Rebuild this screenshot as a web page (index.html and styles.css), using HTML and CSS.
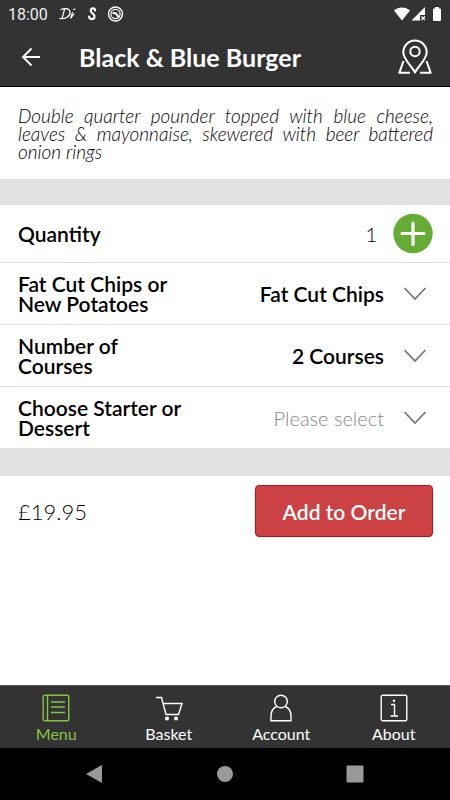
FILE: index.html
```html
<!DOCTYPE html>
<html lang="en">
<head>
<meta charset="utf-8">
<meta name="viewport" content="width=device-width, initial-scale=1">
<title>Black &amp; Blue Burger</title>
<link rel="stylesheet" href="styles.css">
</head>
<body>
<header class="top">
  <div class="status">
    <span class="clock">18:00</span>
    <svg class="notices" width="66" height="18" viewBox="0 0 66 18" fill="none" stroke="#fff" stroke-linecap="round" aria-hidden="true">
      <path d="M5.500 4.500L3 13.500M.800 13.500C7 14.500 11.500 10.500 11 7C10.500 3 5 3 2 4.500M13.500 7.500L11.500 13.500L15 9M14.500 4.500L16 4" stroke-width="1.200"/>
      <path d="M36 5.500C36.500 2.500 31.500 2.500 31.800 6C32 8.500 36 8.500 35.500 12C35 15 29.500 14.500 30.200 11.500" stroke-width="2.200"/>
      <circle cx="56.500" cy="9" r="7" stroke-width="1.400"/>
      <circle cx="56.500" cy="9" r="4.600" stroke-width="1.200"/>
      <path d="M54.300 8L57 8.500L59.500 12" stroke-width="2"/>
    </svg>
    <svg class="signals" width="50" height="16" viewBox="0 0 50 16" fill="#fff" aria-hidden="true">
      <path d="M2 4.500C6.500 .500 13.500 .500 18 4.500L10 14.500Z"/>
      <path d="M33 1V9H28V14.500H19.500Z"/>
      <path d="M29.500 10.500l3.500 3.500M33 10.500l-3.500 3.500" stroke="#fff" stroke-width="1.200"/>
      <path d="M43 1h4v1.500h1a1 1 0 0 1 1 1V14a1 1 0 0 1-1 1h-6a1 1 0 0 1-1-1V3.500a1 1 0 0 1 1-1h1z"/>
    </svg>
  </div>
  <div class="bar">
    <button class="icon-button back" type="button" aria-label="Back">
      <svg width="20" height="20" viewBox="0 0 20 20" fill="none" stroke="#fff" stroke-width="1.800"><path d="M19 10H2M10.500 1.500L2 10l8.500 8.500"/></svg>
    </button>
    <h1>Black &amp; Blue Burger</h1>
    <button class="icon-button" type="button" aria-label="Find us">
      <svg width="36" height="36" viewBox="0 0 36 36" fill="none" stroke="#fff" stroke-width="2" stroke-linejoin="round"><path d="M18 33.500C15 27.500 6.300 20.500 6.300 13.300a11.700 11.700 0 0 1 23.400 0C29.700 20.500 21 27.500 18 33.500Z"/><circle cx="18" cy="12.500" r="4.700"/><path d="M6.500 22L2.300 33.800H13M29.500 22l4.200 11.800H23"/></svg>
    </button>
  </div>
</header>
<main>
  <p class="description">Double quarter pounder topped with blue cheese, leaves &amp; mayonnaise, skewered with beer battered onion rings</p>
  <form class="order">
    <div class="options">
      <div class="row row-quantity">
        <span class="label" id="quantity-label">Quantity</span>
        <output class="quantity" aria-labelledby="quantity-label">1</output>
        <button class="add" type="button" aria-label="Add one">
          <svg width="40" height="40" viewBox="0 0 40 40"><circle cx="20" cy="19.500" r="19.700" fill="#65ac35"/><path d="M20 9v21.500M9 19.500h22" stroke="#fff" stroke-width="3.200" stroke-linecap="round"/></svg>
        </button>
      </div>
      <div class="row">
        <label class="label" for="side">Fat Cut Chips or New Potatoes</label>
        <select id="side"><option>Fat Cut Chips</option><option>New Potatoes</option></select>
        <svg class="chevron" width="24" height="14" viewBox="0 0 24 14"><path d="M1.500 1L12 12L22.500 1"/></svg>
      </div>
      <div class="row">
        <label class="label" for="courses">Number of Courses</label>
        <select id="courses"><option>2 Courses</option></select>
        <svg class="chevron" width="24" height="14" viewBox="0 0 24 14"><path d="M1.500 1L12 12L22.500 1"/></svg>
      </div>
      <div class="row">
        <label class="label" for="extra">Choose Starter or Dessert</label>
        <select id="extra" class="empty"><option>Please select</option></select>
        <svg class="chevron" width="24" height="14" viewBox="0 0 24 14"><path d="M1.500 1L12 12L22.500 1"/></svg>
      </div>
    </div>
    <div class="checkout">
      <span class="price">£19.95</span>
      <button class="submit" type="button">Add to Order</button>
    </div>
  </form>
</main>
<nav class="tabs">
  <a class="active" href="#menu">
    <svg width="28" height="28" viewBox="0 0 28 28"><rect x="1.200" y="1.200" width="25.600" height="25.600" rx="1.500"/><path d="M5.500 1v26M9 8h14M9 13h14M9 18.500h14"/></svg>
    Menu
  </a>
  <a href="#basket">
    <svg width="28" height="28" viewBox="0 0 28 28"><path d="M1 3.500h5.500L11 20.500h12.500L27 9.500H8.500"/><circle cx="12" cy="24.500" r="1.300" fill="#fff"/><circle cx="21" cy="24.500" r="1.300" fill="#fff"/></svg>
    Basket
  </a>
  <a href="#account">
    <svg width="28" height="28" viewBox="0 0 28 28"><circle cx="14" cy="7.500" r="6.300"/><path d="M9.500 12.500C5.500 14.500 4 18 4 22v4.800h20V22c0-4-1.500-7.500-5.500-9.500"/></svg>
    Account
  </a>
  <a href="#about">
    <svg width="28" height="28" viewBox="0 0 28 28"><rect x="1.200" y="1.200" width="25.600" height="25.600" rx="1.500"/><path d="M11 10.500h3.500v11.500M10.500 22h7.500"/><circle cx="14" cy="6.700" r="1.200" fill="#fff" stroke="none"/></svg>
    About
  </a>
</nav>
<div class="system">
  <button type="button" aria-label="System back"><svg width="18" height="20" viewBox="0 0 18 20"><path d="M0 10L16 1v18Z"/></svg></button>
  <button type="button" aria-label="Home"><svg width="18" height="20" viewBox="0 0 18 20"><circle cx="9" cy="10" r="8"/></svg></button>
  <button type="button" aria-label="Recent apps"><svg width="18" height="20" viewBox="0 0 18 20"><rect x=".500" y="1.500" width="17" height="17" rx="1"/></svg></button>
</div>
</body>
</html>
```
FILE: styles.css
```css
* {
  box-sizing: border-box;
}

body {
  margin: 0;
  min-height: 100vh;
  display: flex;
  flex-direction: column;
  background: #fff;
  color: #000;
  font-family: Lato, "Liberation Sans", sans-serif;
  font-size: 21px;
}

button,
select {
  font: inherit;
  border: 0;
  padding: 0;
  background: none;
}

svg {
  display: block;
}

.top {
  background: #333;
  color: #fff;
  border-bottom: 1px solid #000;
}

.status {
  height: 28px;
  padding: 0 8px;
  display: flex;
  align-items: center;
}

.clock {
  font: 16px Roboto, sans-serif;
  color: #eee;
}

.notices {
  margin-left: 11px;
}

.signals {
  margin-left: auto;
}

.bar {
  height: 58px;
  padding: 0 17px 0 21px;
  display: flex;
  align-items: center;
}

h1 {
  flex: 1;
  margin: 0 0 0 38px;
  font-size: 25px;
  font-weight: 700;
  line-height: 28px;
}

.description {
  margin: 0;
  padding: 20px 17px 18px 18px;
  font-size: 19px;
  font-style: italic;
  font-weight: 300;
  line-height: 18px;
  text-align: justify;
}

.options {
  border-top: 26px solid #e2e2e4;
  border-bottom: 27px solid #e2e2e4;
}

.row {
  position: relative;
  display: flex;
  align-items: center;
  min-height: 62px;
  padding: 0 0 0 18px;
  border-bottom: 1px solid #ddd;
}

.row-quantity {
  min-height: 58px;
  padding-right: 17px;
}

.label {
  width: 172px;
  font-weight: 600;
  line-height: 20px;
}

.quantity {
  flex: 1;
  text-align: right;
  font-size: 20px;
  font-weight: 300;
}

.add {
  margin-left: 16px;
}

select {
  flex: 1;
  align-self: stretch;
  min-width: 0;
  padding-right: 66px;
  appearance: none;
  text-align: right;
  text-align-last: right;
  font-weight: 600;
  color: #000;
}

.empty {
  font-size: 20px;
  font-weight: 300;
  color: #888;
}

.chevron {
  position: absolute;
  right: 23px;
  pointer-events: none;
  fill: none;
  stroke: #777;
  stroke-width: 1.8;
}

.checkout {
  display: flex;
  align-items: center;
  justify-content: space-between;
  padding: 9px 17px 9px 18px;
}

.price {
  font-size: 22px;
  font-weight: 300;
}

.submit {
  width: 178px;
  height: 52px;
  border: 1px solid #c40f18;
  border-radius: 4px;
  background: #cc4144;
  color: #fff;
  font-weight: 600;
}

.tabs {
  margin-top: auto;
  height: 63px;
  display: flex;
  background: #333;
  border-top: 1px solid #555;
}

.tabs a {
  flex: 1;
  display: flex;
  flex-direction: column;
  align-items: center;
  padding-top: 8px;
  color: #fff;
  text-decoration: none;
  font-size: 16px;
  line-height: 24px;
}

.tabs svg {
  fill: none;
  stroke: currentColor;
  stroke-width: 1.4;
}

.tabs .active {
  color: #85c441;
}

.system {
  height: 52px;
  display: flex;
  align-items: center;
  justify-content: space-evenly;
  gap: 26px;
  background: #000;
}

.system svg {
  fill: #999;
}
```
